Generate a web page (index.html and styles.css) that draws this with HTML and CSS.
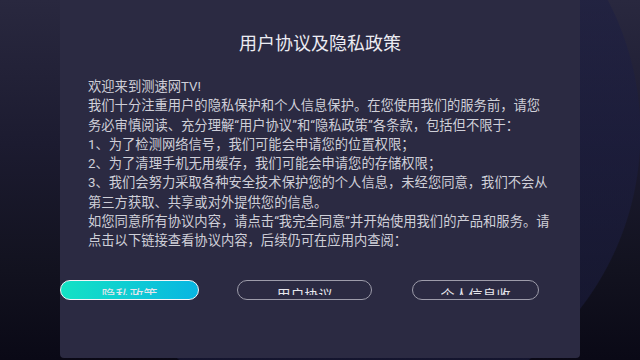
FILE: index.html
```html
<!DOCTYPE html>
<html lang="zh-CN">
<head>
<meta charset="utf-8">
<title>用户协议及隐私政策</title>
<link rel="stylesheet" href="styles.css">
</head>
<body>
<div class="screen">
  <div class="dialog">
    <h1 class="title">用户协议及隐私政策</h1>
    <div class="content">
      <p>欢迎来到测速网TV!</p>
      <p>我们十分注重用户的隐私保护和个人信息保护。在您使用我们的服务前，请您务必审慎阅读、充分理解“用户协议”和“隐私政策”各条款，包括但不限于：</p>
      <p>1、为了检测网络信号，我们可能会申请您的位置权限；</p>
      <p>2、为了清理手机无用缓存，我们可能会申请您的存储权限；</p>
      <p>3、我们会努力采取各种安全技术保护您的个人信息，未经您同意，我们不会从第三方获取、共享或对外提供您的信息。</p>
      <p>如您同意所有协议内容，请点击“我完全同意”并开始使用我们的产品和服务。请点击以下链接查看协议内容，后续仍可在应用内查阅：</p>
    </div>
    <div class="actions">
      <div class="btn btn-primary btn-w1"><span class="btn-label">隐私政策</span></div>
      <div class="btn btn-w2"><span class="btn-label">用户协议</span></div>
      <div class="btn btn-w3"><span class="btn-label">个人信息收</span></div>
    </div>
  </div>
</div>
</body>
</html>
```
FILE: styles.css
```css
html, body {
  margin: 0;
  padding: 0;
}
body {
  width: 640px;
  height: 360px;
  overflow: hidden;
  background: #0b0a18;
}
.screen {
  width: 640px;
  height: 360px;
  display: flex;
  justify-content: center;
  background:
    radial-gradient(circle 287px at 354px 133px, rgba(28, 30, 66, 0.55) 99.6%, rgba(0,0,0,0) 100%),
    linear-gradient(to bottom, #29283f 0%, #1c1b30 40%, #12121f 75%, #0a0916 100%);
}
.dialog {
  width: 520px;
  height: 358px;
  background: #2b2a42;
  border-radius: 0 0 4px 4px;
  display: flex;
  flex-direction: column;
}
.title {
  margin: 0;
  padding-top: 30px;
  font-family: "Noto Sans CJK SC", sans-serif;
  font-weight: 400;
  font-size: 18px;
  line-height: 24px;
  color: #ececf2;
  text-align: center;
}
.content {
  margin-top: 23px;
  padding: 0 29px 0 28px;
  font-family: Roboto, "Noto Sans CJK SC", sans-serif;
  font-size: 13.3px;
  line-height: 19.3px;
  color: #cfcfd8;
}
.content p {
  margin: 0;
}
.actions {
  margin-top: 29px;
  display: flex;
  align-items: center;
}
.btn {
  box-sizing: border-box;
  height: 20px;
  border: 1px solid #9d9caa;
  border-radius: 10px;
  display: flex;
  justify-content: center;
  overflow: hidden;
}
.btn-w1 { width: 139px; }
.btn-w2 { width: 135px; margin-left: 38px; }
.btn-w3 { width: 127px; margin-left: 40px; }
.btn-primary {
  border-color: #f4f6f8;
  background: linear-gradient(to right, #14e2c4, #08b6e2);
}
.btn-label {
  display: block;
  margin-top: 6px;
  height: 8px;
  overflow: hidden;
  font-family: "Noto Sans CJK SC", sans-serif;
  font-size: 14px;
  line-height: 14px;
  color: #e6e6ec;
}
```
